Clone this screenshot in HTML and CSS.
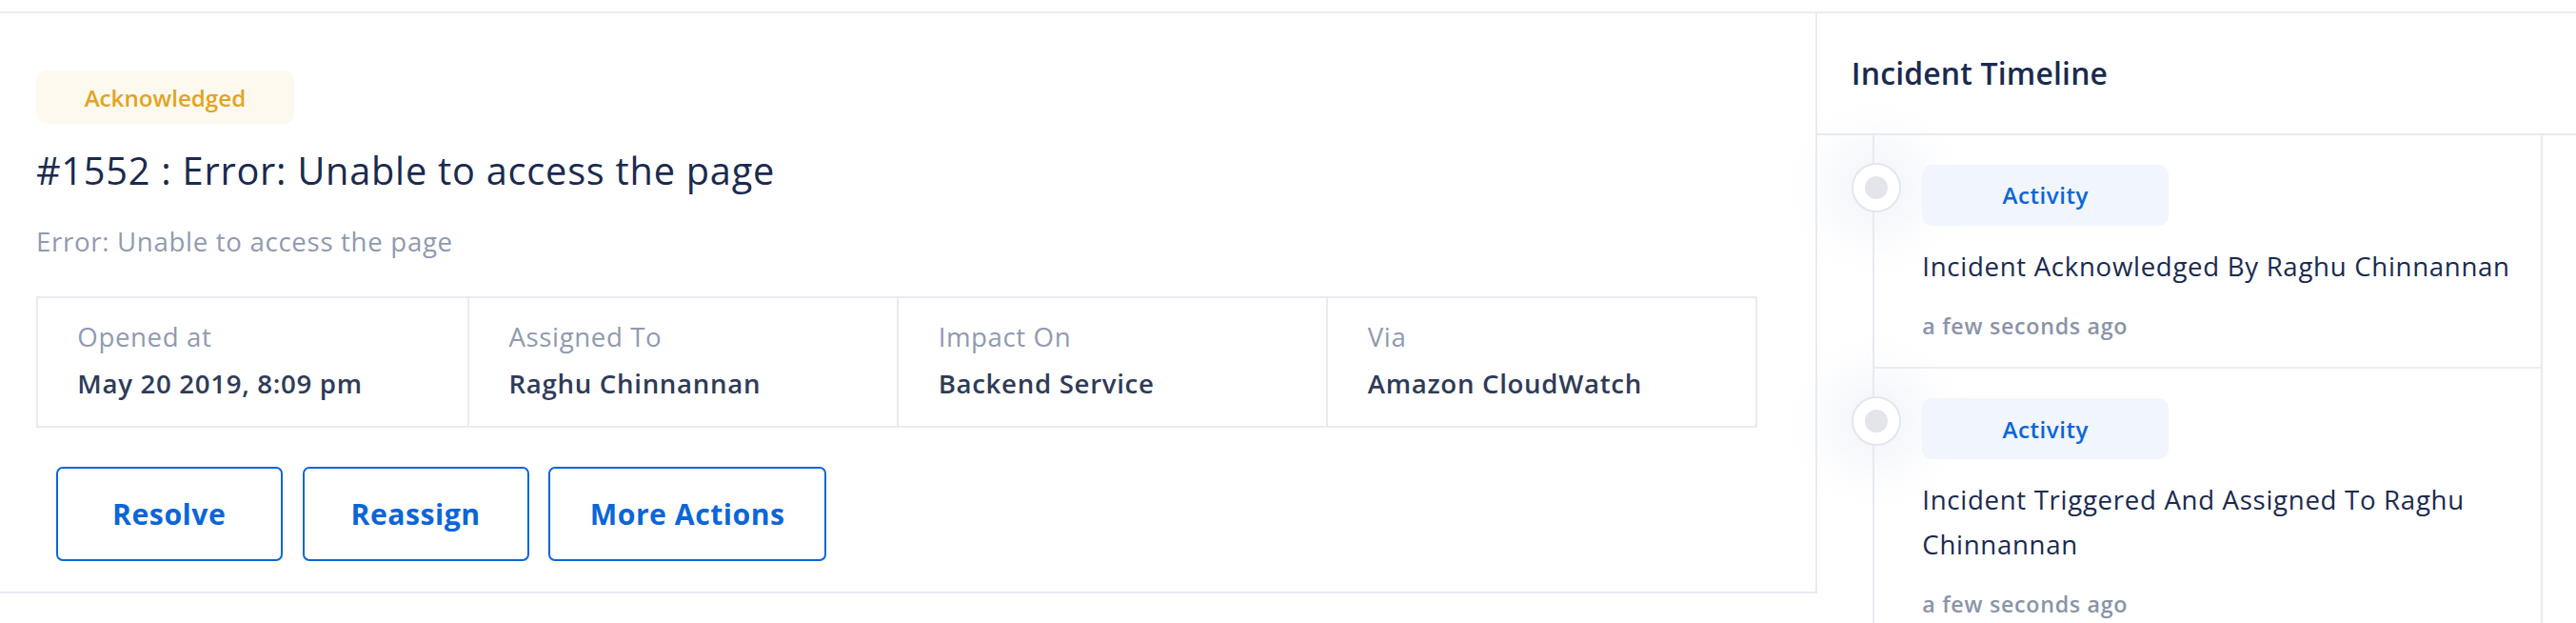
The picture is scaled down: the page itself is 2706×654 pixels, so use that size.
FILE: index.html
```html
<!DOCTYPE html>
<html lang="en">
<head>
<meta charset="utf-8">
<title>Incident #1552</title>
<link rel="stylesheet" href="styles.css">
</head>
<body>
<div class="page">
  <div class="top-strip"></div>
  <div class="layout">
    <section class="incident">
      <div class="status-badge">Acknowledged</div>
      <h1 class="incident-title">#1552 : Error: Unable to access the page</h1>
      <p class="incident-desc">Error: Unable to access the page</p>
      <div class="info-table">
        <div class="info-cell">
          <div class="info-label">Opened at</div>
          <div class="info-value">May 20 2019, 8:09 pm</div>
        </div>
        <div class="info-cell">
          <div class="info-label">Assigned To</div>
          <div class="info-value">Raghu Chinnannan</div>
        </div>
        <div class="info-cell">
          <div class="info-label">Impact On</div>
          <div class="info-value">Backend Service</div>
        </div>
        <div class="info-cell">
          <div class="info-label">Via</div>
          <div class="info-value">Amazon CloudWatch</div>
        </div>
      </div>
      <div class="actions">
        <button class="btn btn-resolve">Resolve</button>
        <button class="btn btn-reassign">Reassign</button>
        <button class="btn btn-more">More Actions</button>
      </div>
    </section>
    <aside class="timeline">
      <div class="timeline-header">Incident Timeline</div>
      <div class="timeline-list">
        <div class="tl-item">
          <span class="tl-dot"><span class="tl-dot-inner"></span></span>
          <div class="tl-badge">Activity</div>
          <div class="tl-text">Incident Acknowledged By Raghu Chinnannan</div>
          <div class="tl-time">a few seconds ago</div>
        </div>
        <div class="tl-item">
          <span class="tl-dot"><span class="tl-dot-inner"></span></span>
          <div class="tl-badge">Activity</div>
          <div class="tl-text">Incident Triggered And Assigned To Raghu Chinnannan</div>
          <div class="tl-time">a few seconds ago</div>
        </div>
      </div>
    </aside>
  </div>
</div>
</body>
</html>
```
FILE: styles.css
```css
html, body {
  margin: 0;
  padding: 0;
  background: #ffffff;
  overflow: hidden;
}
body {
  font-family: "Open Sans", "Lato", sans-serif;
  color: #1b2a4e;
}
.page {
  zoom: 1.7257;
  width: 1568px;
  height: 379px;
  overflow: hidden;
}
.top-strip {
  height: 7px;
  border-bottom: 1.2px solid #e8ecf3;
}
.layout {
  display: flex;
  height: 371px;
}
.incident {
  width: 1106px;
  box-sizing: border-box;
  padding: 35px 36px 18px 22px;
  border-right: 1.2px solid #e8ebf1;
  border-bottom: 1.2px solid #e8e9f0;
  height: 353px;
  flex-shrink: 0;
}
.status-badge {
  width: 157px;
  height: 32px;
  display: flex;
  align-items: center;
  justify-content: center;
  background: #fef9ef;
  color: #e2a421;
  border-radius: 6px;
  font-size: 14px;
  font-weight: 600;
}
.incident-title {
  margin: 14px 0 0;
  font-size: 23px;
  letter-spacing: 0.45px;
  line-height: 30px;
  font-weight: 400;
  color: #1a2a4f;
}
.incident-desc {
  margin: 17px 0 0;
  font-size: 16px;
  letter-spacing: 0.4px;
  line-height: 22px;
  color: #8f9ab0;
}
.info-table {
  margin-top: 22px;
  display: grid;
  grid-template-columns: repeat(4, 1fr);
  width: 1048px;
  height: 80px;
  box-sizing: border-box;
  border: 1.2px solid #eaeaf0;
}
.info-cell {
  padding: 13px 24px 0;
  border-left: 1.2px solid #eaeaf0;
}
.info-cell:first-child {
  border-left: none;
}
.info-label {
  font-size: 16px;
  letter-spacing: 0.35px;
  line-height: 21px;
  color: #8f9ab0;
}
.info-value {
  margin-top: 7px;
  font-size: 16px;
  letter-spacing: 0.4px;
  line-height: 21px;
  font-weight: 600;
  color: #2f3b57;
}
.actions {
  display: flex;
  gap: 12px;
  margin-top: 24px;
  padding-left: 12px;
}
.btn {
  height: 57px;
  box-sizing: border-box;
  border: 1.2px solid #0b66d8;
  border-radius: 4px;
  background: #ffffff;
  color: #0b66d8;
  font-family: "Open Sans", "Lato", sans-serif;
  font-size: 17.5px;
  letter-spacing: 0.3px;
  font-weight: 700;
  padding: 0;
}
.btn-resolve { width: 138px; }
.btn-reassign { width: 138px; }
.btn-more { width: 169px; }
.timeline {
  flex: 1;
  min-width: 0;
}
.timeline-header {
  height: 74px;
  box-sizing: border-box;
  border-bottom: 1.2px solid #e8ebf1;
  padding-left: 21px;
  display: flex;
  align-items: center;
  font-size: 18.5px;
  letter-spacing: 0.1px;
  font-weight: 600;
  color: #1a2a4f;
}
.timeline-list {
  padding-left: 34px;
}
.tl-item {
  position: relative;
  width: 408px;
  box-sizing: border-box;
  border-left: 1.2px solid #e8ebf1;
  border-right: 1.2px solid #e8ebf1;
  border-bottom: 1.2px solid #ecedf3;
  padding: 18px 8px 15px 29px;
}
.tl-dot {
  position: absolute;
  left: -14px;
  top: 17px;
  width: 30px;
  height: 30px;
  box-sizing: border-box;
  border-radius: 50%;
  border: 1.2px solid #e2e6ee;
  background: #ffffff;
  display: flex;
  align-items: center;
  justify-content: center;
  box-shadow: 0 0 30px 14px rgba(225, 231, 244, 0.45);
}
.tl-dot-inner {
  width: 14px;
  height: 14px;
  border-radius: 50%;
  background: #e4e5eb;
}
.tl-badge {
  position: relative;
  width: 150px;
  height: 37px;
  display: flex;
  align-items: center;
  justify-content: center;
  background: #f1f5fd;
  color: #0b66d8;
  border-radius: 6px;
  font-size: 14px;
  letter-spacing: 0.3px;
  font-weight: 600;
}
.tl-text {
  margin-top: 11px;
  font-size: 16px;
  letter-spacing: 0.4px;
  line-height: 27px;
  color: #1a2a4f;
}
.tl-time {
  margin-top: 13px;
  font-size: 13.5px;
  letter-spacing: 0.4px;
  line-height: 20px;
  font-weight: 600;
  color: #8a94a8;
}
```
